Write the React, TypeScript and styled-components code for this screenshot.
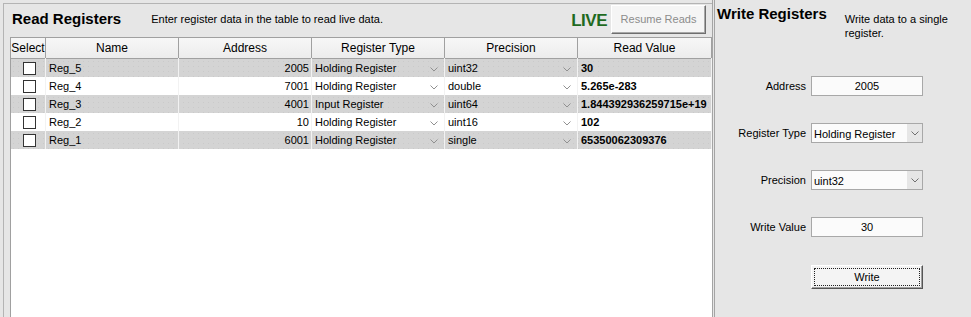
import React from 'react'
import styled, { createGlobalStyle } from 'styled-components'

const GlobalStyle = createGlobalStyle`
  html, body { margin: 0; padding: 0; }
  body {
    font-family: "Liberation Sans", Arial, sans-serif;
    font-size: 11px;
    color: #000;
  }
`

const dots = `
  background-color: #e6e6e6;
  background-image: radial-gradient(#d8d8d8 0.6px, transparent 0.7px);
  background-size: 6px 6px;
`

const Page = styled.div`
  width: 971px;
  height: 317px;
  display: flex;
  overflow: hidden;
  ${dots}
`

const LeftPanel = styled.div`
  width: 702px;
  flex-shrink: 0;
  margin: 3px 0 0 3px;
  border-top: 1px solid #b4b4b4;
  border-left: 1px solid #b4b4b4;
  padding-left: 6px;
  display: flex;
  flex-direction: column;
`

const HeaderBar = styled.div`
  height: 33px;
  display: flex;
  align-items: center;
`

const Title = styled.div`
  font-size: 15px;
  font-weight: bold;
  padding-left: 2px;
  margin-top: -4px;
  white-space: nowrap;
  flex-shrink: 0;
`

const Sub = styled.div<{ $width?: number }>`
  font-size: 11px;
  margin-left: ${p => (p.$width ? 18 : 30)}px;
  width: ${p => (p.$width ? `${p.$width}px` : 'auto')};
  line-height: 14px;
  margin-top: ${p => (p.$width ? 3 : -4)}px;
`

const Live = styled.div`
  margin-left: auto;
  font-size: 17px;
  font-weight: bold;
  color: #1f6a1f;
  letter-spacing: -0.5px;
  margin-right: 4px;
`

const Resume = styled.button`
  width: 95px;
  height: 29px;
  margin-top: -3px;
  margin-right: 6px;
  font-family: inherit;
  font-size: 11px;
  color: #8c8c8c;
  background: #f5f5f5;
  border: 1px solid;
  border-color: #ffffff #6e6e6e #6e6e6e #ffffff;
  box-shadow: inset -1px -1px 0 #a8a8a8;
  padding: 0;
`

const Table = styled.div`
  flex: 1;
  width: 701px;
  background: #fff;
  border-left: 1px solid #a0a0a0;
`

const cols = '35px 133px 133px 133px 133px 134px'

const HeadRow = styled.div`
  display: grid;
  grid-template-columns: ${cols};
  height: 20px;
  background: linear-gradient(#f7f7f7, #ececec);
  border-top: 1px solid #a0a0a0;
  border-bottom: 1px solid #a0a0a0;
`

const HeadCell = styled.div`
  font-size: 12px;
  display: flex;
  align-items: center;
  justify-content: center;
  border-right: 1px solid #a0a0a0;
  overflow: hidden;
  white-space: nowrap;
`

const Row = styled.div<{ $shade: boolean }>`
  display: grid;
  grid-template-columns: ${cols};
  height: 18px;
  ${p =>
    p.$shade
      ? `background-color: #d4d4d4;
         background-image: radial-gradient(#cacaca 0.6px, transparent 0.7px);
         background-size: 5px 5px;`
      : 'background: #ffffff;'}
`

const Cell = styled.div<{ $align?: 'left' | 'right' | 'center'; $bold?: boolean }>`
  position: relative;
  display: flex;
  align-items: center;
  justify-content: ${p => (p.$align === 'right' ? 'flex-end' : p.$align === 'center' ? 'center' : 'flex-start')};
  padding: 0 2px 0 3px;
  margin-top: -1px;
  font-weight: ${p => (p.$bold ? 'bold' : 'normal')};
  border-right: 1px solid #f2f2f2;
  white-space: nowrap;
  overflow: hidden;
`

const Check = styled.span`
  width: 11px;
  height: 11px;
  background: #fff;
  border: 1px solid #333;
  margin: 1px 0 0 1px;
`

const Chevron = styled.span`
  position: absolute;
  right: 6px;
  top: 9px;
  display: flex;
`

const Divider = styled.div`
  width: 1px;
  height: 100%;
  flex-shrink: 0;
  border-left: 1px solid #a4a4a4;
  border-right: 1px solid #a4a4a4;
  margin-left: 0;
`

const RightPanel = styled.div`
  flex: 1;
  padding-top: 4px;
  padding-left: 0;
  display: flex;
  flex-direction: column;
`

const RightHead = styled.div`
  height: 33px;
  display: flex;
  align-items: flex-start;
  padding-top: 5px;
  box-sizing: border-box;
`

const Form = styled.div`
  margin-top: 39px;
  display: grid;
  grid-template-columns: 91px 112px;
  column-gap: 5px;
  row-gap: 27px;
  align-items: center;
`

const Label = styled.div`
  text-align: right;
  font-size: 11px;
`

const Field = styled.div`
  height: 20px;
  box-sizing: border-box;
  border: 1px solid #a8a8a8;
  background: #fbfbfb;
  display: flex;
  align-items: center;
  justify-content: center;
`

const SelectBox = styled.div`
  height: 20px;
  box-sizing: border-box;
  border: 1px solid #a8a8a8;
  background: #fbfbfb;
  display: flex;
  align-items: center;
`

const SelectText = styled.span`
  flex: 1;
  padding-left: 2px;
  margin-top: 1px;
`

const SelectBtn = styled.span`
  width: 15px;
  height: 100%;
  background: #e6e6e6;
  display: flex;
  align-items: center;
  justify-content: center;
`

const WriteBtn = styled.button`
  grid-column: 2;
  margin-top: 1px;
  height: 24px;
  font-family: inherit;
  font-size: 11px;
  background: #f4f4f4;
  border: 1px solid;
  border-color: #ffffff #555 #555 #ffffff;
  box-shadow: inset -1px -1px 0 #a0a0a0;
  padding: 0;
  position: relative;
  &::after {
    content: '';
    position: absolute;
    inset: 2px;
    border: 1px dotted #222;
  }
`

const ChevronIcon = ({ color = '#909090' }: { color?: string }) => (
  <svg width="8" height="5" viewBox="0 0 8 5">
    <path d="M0.5 0.5 L4 4 L7.5 0.5" fill="none" stroke={color} strokeWidth="1" />
  </svg>
)

const rows = [
  { name: 'Reg_5', addr: '2005', type: 'Holding Register', prec: 'uint32', val: '30' },
  { name: 'Reg_4', addr: '7001', type: 'Holding Register', prec: 'double', val: '5.265e-283' },
  { name: 'Reg_3', addr: '4001', type: 'Input Register', prec: 'uint64', val: '1.844392936259715e+19' },
  { name: 'Reg_2', addr: '10', type: 'Holding Register', prec: 'uint16', val: '102' },
  { name: 'Reg_1', addr: '6001', type: 'Holding Register', prec: 'single', val: '65350062309376' },
]

export default function App() {
  return (
    <Page>
      <GlobalStyle />
      <LeftPanel>
        <HeaderBar>
          <Title>Read Registers</Title>
          <Sub>Enter register data in the table to read live data.</Sub>
          <Live>LIVE</Live>
          <Resume>Resume Reads</Resume>
        </HeaderBar>
        <Table>
          <HeadRow>
            <HeadCell>Select</HeadCell>
            <HeadCell>Name</HeadCell>
            <HeadCell>Address</HeadCell>
            <HeadCell>Register Type</HeadCell>
            <HeadCell>Precision</HeadCell>
            <HeadCell>Read Value</HeadCell>
          </HeadRow>
          {rows.map((r, i) => (
            <Row key={r.name} $shade={i % 2 === 0}>
              <Cell $align="center"><Check /></Cell>
              <Cell>{r.name}</Cell>
              <Cell $align="right">{r.addr}</Cell>
              <Cell>
                {r.type}
                <Chevron><ChevronIcon /></Chevron>
              </Cell>
              <Cell>
                {r.prec}
                <Chevron><ChevronIcon /></Chevron>
              </Cell>
              <Cell $bold>{r.val}</Cell>
            </Row>
          ))}
        </Table>
      </LeftPanel>
      <Divider />
      <RightPanel>
        <RightHead>
          <Title>Write Registers</Title>
          <Sub $width={110}>Write data to a single register.</Sub>
        </RightHead>
        <Form>
          <Label>Address</Label>
          <Field>2005</Field>
          <Label>Register Type</Label>
          <SelectBox>
            <SelectText>Holding Register</SelectText>
            <SelectBtn><ChevronIcon color="#707070" /></SelectBtn>
          </SelectBox>
          <Label>Precision</Label>
          <SelectBox>
            <SelectText>uint32</SelectText>
            <SelectBtn><ChevronIcon color="#707070" /></SelectBtn>
          </SelectBox>
          <Label>Write Value</Label>
          <Field>30</Field>
          <WriteBtn>Write</WriteBtn>
        </Form>
      </RightPanel>
    </Page>
  )
}
